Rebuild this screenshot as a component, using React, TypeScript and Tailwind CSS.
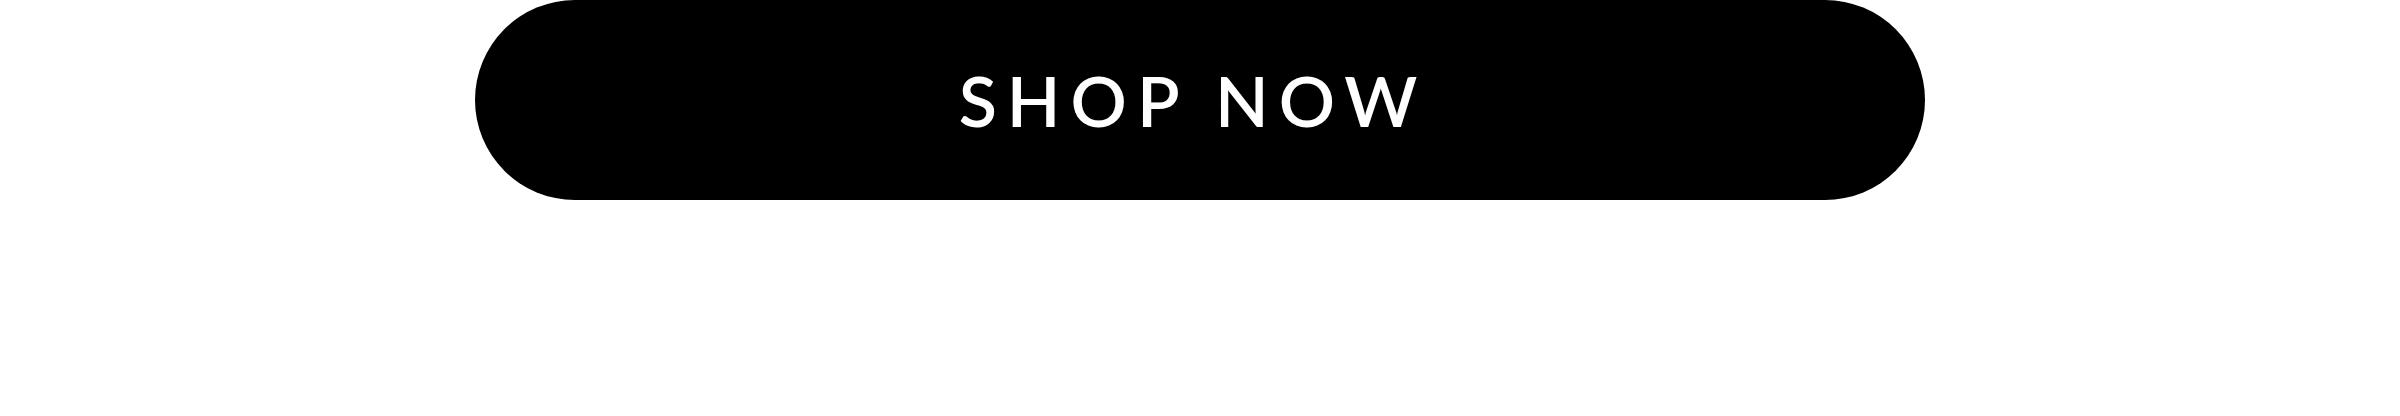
import React from "react";

export default function App() {
  return (
    <div className="flex h-[416px] w-full justify-center bg-white">
      <a
        href="#"
        className="flex h-[200px] w-[1450px] items-center justify-center rounded-full bg-black text-white"
      >
        <span
          className="pr-[14px] text-[70px] font-semibold uppercase leading-none tracking-[10px]"
          style={{ fontFamily: "Lato, 'Open Sans', sans-serif" }}
        >
          Shop Now
        </span>
      </a>
    </div>
  );
}
